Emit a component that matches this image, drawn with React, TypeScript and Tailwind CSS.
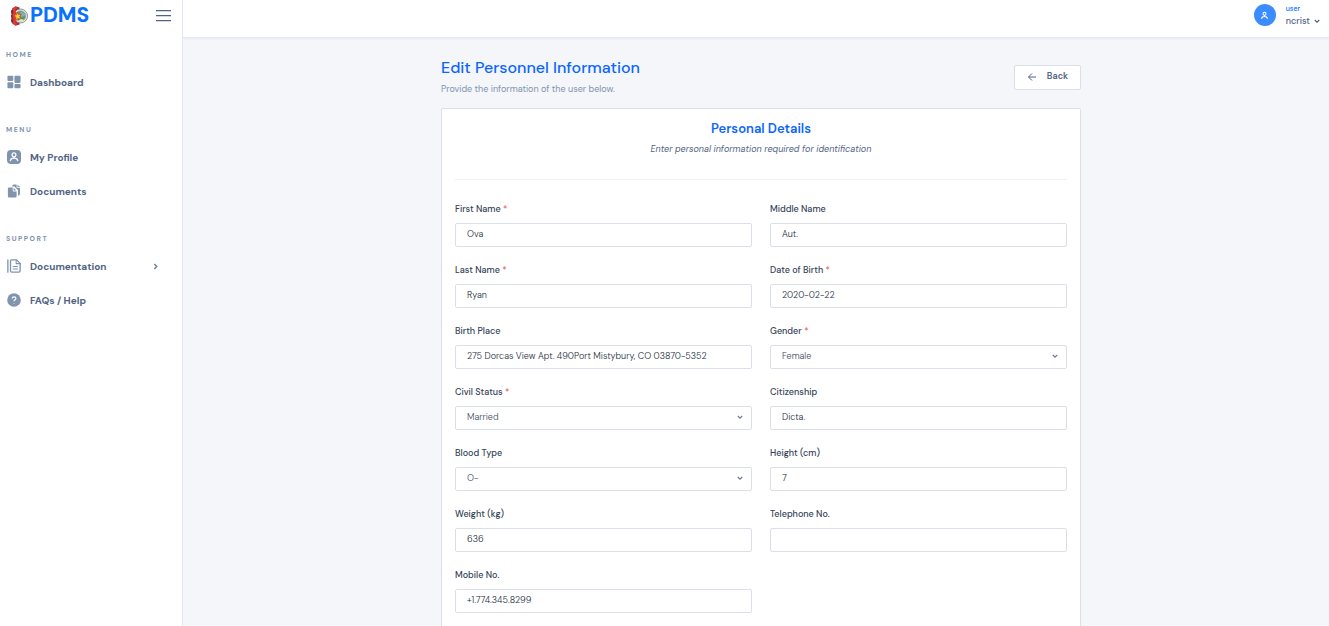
import { useState, type ReactNode } from "react";

type FieldSpec = {
  id: string;
  label: string;
  value: string;
  required?: boolean;
  options?: string[];
};

const fields: FieldSpec[] = [
  { id: "first-name", label: "First Name", value: "Ova", required: true },
  { id: "middle-name", label: "Middle Name", value: "Aut." },
  { id: "last-name", label: "Last Name", value: "Ryan", required: true },
  { id: "birth-date", label: "Date of Birth", value: "2020-02-22", required: true },
  { id: "birth-place", label: "Birth Place", value: "275 Dorcas View Apt. 490Port Mistybury, CO 03870-5352" },
  { id: "gender", label: "Gender", value: "Female", required: true, options: ["Female", "Male"] },
  { id: "civil-status", label: "Civil Status", value: "Married", required: true, options: ["Married", "Single", "Widowed"] },
  { id: "citizenship", label: "Citizenship", value: "Dicta." },
  { id: "blood-type", label: "Blood Type", value: "O-", options: ["O-", "O+", "A-", "A+", "B-", "B+", "AB-", "AB+"] },
  { id: "height", label: "Height (cm)", value: "7" },
  { id: "weight", label: "Weight (kg)", value: "636" },
  { id: "telephone", label: "Telephone No.", value: "" },
  { id: "mobile", label: "Mobile No.", value: "+1.774.345.8299" },
];

function Chevron({ className }: { className: string }) {
  return (
    <svg viewBox="0 0 6 6" className={className} fill="none" stroke="currentColor" strokeWidth="1.2" aria-hidden="true">
      <path d="M.8 2 3 4.1 5.200 2" />
    </svg>
  );
}

function Field({ spec }: { spec: FieldSpec }) {
  const [value, setValue] = useState(spec.value);
  const box = "h-6 w-full rounded-xs border border-[#dbdfea] bg-white px-[11px] text-[9px] font-light";
  return (
    <div className="flex flex-col gap-[7px]">
      <label htmlFor={spec.id} className="text-[9px] leading-[14px] font-medium text-[#344357]">
        {spec.label}
        {spec.required && <span className="font-normal text-[#e85347]"> *</span>}
      </label>
      {spec.options ? (
        <div className="relative">
          <select
            id={spec.id}
            value={value}
            onChange={(e) => setValue(e.target.value)}
            className={`${box} block appearance-none text-[#3c4d62]`}
          >
            {spec.options.map((option) => (
              <option key={option}>{option}</option>
            ))}
          </select>
          <Chevron className="pointer-events-none absolute top-2 right-[9px] size-1.5 text-[#6e7f99]" />
        </div>
      ) : (
        <input
          id={spec.id}
          value={value}
          onChange={(e) => setValue(e.target.value)}
          className={`${box} pb-0.5 text-[#26303d]`}
        />
      )}
    </div>
  );
}

function Seal() {
  return (
    <svg viewBox="0 0 18 20" className="h-5 w-[18px]" aria-hidden="true">
      <path d="M6.500.5 2.500 2 1 6.500l.8 3.500L1 14l1.600 4 3.900 1.500 3-1V1.500z" fill="#8c3535" />
      <circle cx="10.500" cy="10" r="7" fill="#e9ece8" stroke="#74787e" strokeWidth=".8" />
      <circle cx="10.500" cy="10" r="5.200" fill="#4f9e60" stroke="#98a69c" strokeWidth=".8" />
      <path d="M10 5.500 14.500 7l.5 3-4 1z" fill="#7fb0c4" />
      <path d="M6.500 1 3.500 3.500 5 7l-1.800 3L5 13l-1.500 3L6.500 19" fill="none" stroke="#e8362f" strokeWidth="2.600" />
      <path d="M2 4v2.500M1.800 9v2.500M2 14v2.500" stroke="#302c36" strokeWidth="1.200" />
      <path d="m7.500 6 1.200 2.600 2.700-.5-1.600 2.500 1.400 2.800-3-.9-2.300 2 .1-3.200L3.500 9.500l3-.8z" fill="#f5cf36" stroke="#d93730" strokeWidth=".8" />
      <path d="m8 15 3-2 3 1-2 1.800z" fill="#ece7c4" />
    </svg>
  );
}

function PersonGlyph() {
  return (
    <g fill="none" stroke="currentColor" strokeLinecap="round" strokeLinejoin="round">
      <circle cx="8" cy="5.500" r="2.200" />
      <path d="M8 8v1.300M3.800 12.200c.2-1.900 1.900-2.900 4.200-2.900s4 1 4.200 2.900" />
    </g>
  );
}

const icons: Record<string, ReactNode> = {
  dashboard: (
    <g fill="currentColor">
      <rect x=".5" y=".8" width="6.700" height="6" rx="1.200" />
      <rect x="8.500" y=".8" width="7" height="8.200" rx="1.200" />
      <rect x=".5" y="8.200" width="6.700" height="7" rx="1.200" />
      <rect x="8.500" y="10.400" width="7" height="4.800" rx="1.200" />
    </g>
  ),
  profile: (
    <>
      <rect x="0" y="0" width="16" height="16" rx="4.500" fill="currentColor" />
      <g className="text-white" strokeWidth="1.400">
        <PersonGlyph />
      </g>
    </>
  ),
  documents: (
    <g fill="currentColor">
      <path d="M2.500 4h4v3.500a1 1 0 0 0 1 1H11V14a1.500 1.500 0 0 1-1.500 1.500h-7A1.500 1.500 0 0 1 1 14V5.500A1.500 1.500 0 0 1 2.500 4z" />
      <path d="M7.500 4.300 10.500 7.500h-3z" />
      <path d="M6 2.800C6 1.500 6.800.7 8 .7h3v3.500h3.800V11c0 1.300-.8 2-2.200 2V7L8.500 2.800z" />
      <path d="M12 .8 14.800 3.500H12z" />
    </g>
  ),
  documentation: (
    <g fill="none" stroke="currentColor" strokeWidth="1.500" strokeLinejoin="round" strokeLinecap="round">
      <path d="M1 1v14M5 1h6l4 4v8.500a1.500 1.500 0 0 1-1.500 1.500h-8A1.500 1.500 0 0 1 4 13.500V2a1 1 0 0 1 1-1z" />
      <path d="M10.500 1.300v4H15M7 8.500h5M7 11.500h5" strokeWidth="1.200" />
    </g>
  ),
  help: (
    <>
      <circle cx="8" cy="8" r="7.800" fill="currentColor" />
      <path d="M5.900 6.300C6 3.700 10.200 3.800 10.200 6.200 10.200 7.700 8 7.800 8 9.400M8 11.300v.8" fill="none" stroke="#fff" strokeWidth="1.300" />
    </>
  ),
};

function NavItem({ icon, label, expandable }: { icon: string; label: string; expandable?: boolean }) {
  return (
    <a href="#" className="flex h-[34px] items-center gap-2 text-[10px] font-bold text-[#526484]">
      <svg viewBox="0 0 16 16" className="size-4 shrink-0 p-px text-[#8094ae]" aria-hidden="true">
        {icons[icon]}
      </svg>
      <span>{label}</span>
      {expandable && <Chevron className="mr-[11px] ml-auto size-[7px] -rotate-90 text-[#6b7f9c]" />}
    </a>
  );
}

function NavGroup({ title, children }: { title: string; children: ReactNode }) {
  return (
    <section>
      <h2 className="mb-[5px] text-[7px] leading-[10px] font-bold tracking-[1.5px] text-[#8094ae] uppercase">{title}</h2>
      {children}
    </section>
  );
}

export default function App() {
  return (
    <div className="flex h-screen overflow-hidden bg-[#f5f6fa] font-['DM_Sans',Inter,sans-serif]">
      <aside className="flex w-[183px] shrink-0 flex-col border-r border-[#e5e9f2] bg-white">
        <div className="flex h-[31px] items-center justify-between pr-[11px] pl-[10px]">
          <a href="#" className="flex items-center gap-0.5 text-[21px] font-extrabold text-[#0971fe]">
            <Seal />
            PDMS
          </a>
          <button type="button" aria-label="Toggle menu" className="text-[#526484]">
            <svg viewBox="0 0 15 12" className="h-3 w-[15px]" fill="currentColor" aria-hidden="true">
              <path d="M0 0h15v1.200H0zM0 5h15v1.200H0zM0 10h15v1.200H0z" />
            </svg>
          </button>
        </div>
        <nav className="flex flex-col gap-[26px] pt-[19px] pr-3 pl-1.5">
          <NavGroup title="Home">
            <NavItem icon="dashboard" label="Dashboard" />
          </NavGroup>
          <NavGroup title="Menu">
            <NavItem icon="profile" label="My Profile" />
            <NavItem icon="documents" label="Documents" />
          </NavGroup>
          <NavGroup title="Support">
            <NavItem icon="documentation" label="Documentation" expandable />
            <NavItem icon="help" label="FAQs / Help" />
          </NavGroup>
        </nav>
      </aside>

      <div className="flex min-w-0 flex-1 flex-col">
        <header className="flex h-[38px] shrink-0 items-start justify-end border-b border-[#e5e9f2] bg-white pt-1 pr-[9px] shadow-xs">
          <button type="button" className="flex items-start gap-2.5 text-left">
            <span className="flex size-[22px] items-center justify-center rounded-full bg-[#3b8cff] text-white">
              <svg viewBox="0 0 16 16" className="size-[11px]" strokeWidth="1.500" aria-hidden="true">
                <PersonGlyph />
              </svg>
            </span>
            <span className="flex flex-col">
              <span className="text-[7px] leading-[10px] font-medium text-[#0971fe]">user</span>
              <span className="flex items-center gap-1 text-[9px] leading-[14px] font-medium text-[#526484]">
                ncrist
                <Chevron className="size-1.5" />
              </span>
            </span>
          </button>
        </header>

        <main className="flex-1 pt-5 pl-2.5">
          <div className="mx-auto w-full max-w-[640px]">
            <div className="flex items-center justify-between">
              <div>
                <h1 className="text-base leading-5 font-medium text-[#0b66ff]">
                  Edit Personnel Information
                </h1>
                <p className="mt-1 text-[9px] leading-[14px] text-[#8094ae]">Provide the information of the user below.</p>
              </div>
              <button
                type="button"
                className="flex h-[25px] items-center gap-2.5 rounded-xs border border-[#dbdfea] bg-white px-3 text-[9px] font-semibold text-[#526484]"
              >
                <svg viewBox="0 0 10 10" className="size-2.5" fill="none" stroke="currentColor" aria-hidden="true">
                  <path d="M9 5H1.500M5 1.500 1.500 5 5 8.500" />
                </svg>
                Back
              </button>
            </div>

            <form className="mt-3 rounded-xs border border-[#dbdfea] bg-white px-[13px] pt-2.5">
              <div className="border-b border-[#f0f2f7] pb-[23px] text-center">
                <h2 className="text-[13px] leading-5 font-semibold text-[#0b66ff]">Personal Details</h2>
                <p className="mt-[3px] text-[9px] leading-[14px] text-[#526484] italic">
                  Enter personal information required for identification
                </p>
              </div>
              <div className="grid grid-cols-2 gap-x-[18px] gap-y-4 pt-[22px] pb-8">
                {fields.map((spec) => (
                  <Field key={spec.id} spec={spec} />
                ))}
              </div>
            </form>
          </div>
        </main>
      </div>
    </div>
  );
}
